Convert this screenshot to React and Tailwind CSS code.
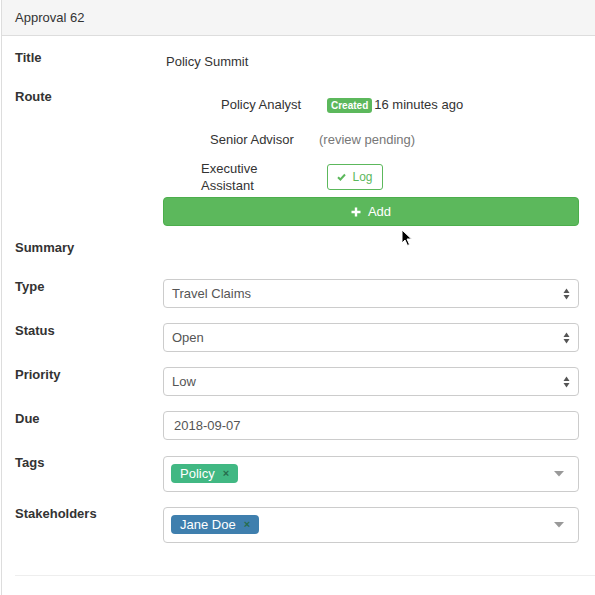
import React from "react";

const font = { fontFamily: '"Liberation Sans", Arial, sans-serif' };

const Label = ({ children }) => (
  <div className="w-[148px] shrink-0 text-[13px] leading-[20px] font-bold text-[#333]">
    {children}
  </div>
);

const SelectArrows = () => (
  <svg width="7" height="12" viewBox="0 0 7 12" className="absolute right-[8px] top-[8px]">
    <path d="M3.5 0.5 L6.5 5 L0.5 5 Z" fill="#555" />
    <path d="M0.5 7 L6.5 7 L3.5 11.5 Z" fill="#555" />
  </svg>
);

const SelectBox = ({ value }) => (
  <div className="relative mt-[2px] h-[29px] w-full rounded-[4px] border border-[#ccc] bg-white pl-[8px] text-[13px] leading-[27px] text-[#555]">
    {value}
    <SelectArrows />
  </div>
);

const Caret = () => (
  <svg width="10" height="6" viewBox="0 0 10 6" className="absolute right-[14px] top-[14px]">
    <path d="M0 0 L10 0 L5 5.5 Z" fill="#999" />
  </svg>
);

const Chip = ({ label, bg }) => (
  <span
    className={`flex h-[19px] items-center rounded-[4px] pl-[9px] pr-[9px] text-[13px] leading-[19px] text-white ${bg}`}
  >
    {label}
    <span className="ml-[8px] text-[11px] font-bold text-[#266d4d]">×</span>
  </span>
);

const FormRow = ({ label, className = "", children }) => (
  <div className={`flex ${className}`}>
    <Label>{label}</Label>
    <div className="flex-1">{children}</div>
  </div>
);

const App = () => {
  return (
    <div className="relative h-[595px] w-[595px] overflow-hidden bg-white" style={font}>
      <div className="ml-px min-h-[595px] border-l border-[#ddd]">
        {/* Panel heading */}
        <div className="h-[36px] border-b border-[#ddd] bg-[#f5f5f5] pl-[13px] text-[13px] leading-[35px] text-[#333]">
          Approval 62
        </div>

        <div className="pl-[13px] pr-[16px]">
          {/* Title */}
          <FormRow label="Title" className="mt-[12px]">
            <div className="pl-[3px] pt-[4px] text-[13px] leading-[20px] text-[#333]">
              Policy Summit
            </div>
          </FormRow>

          {/* Route */}
          <FormRow label="Route" className="mt-[15px]">
            <div className="pt-[8px] text-[13px] text-[#333]">
              <div className="flex h-[20px] items-center">
                <div className="w-[164px] pl-[58px]">Policy Analyst</div>
                <span className="rounded-[3px] bg-[#5cb85c] px-[4px] text-[10px] font-bold leading-[15px] text-white">
                  Created
                </span>
                <span className="ml-[2px]">16 minutes ago</span>
              </div>
              <div className="mt-[15px] flex h-[20px] items-center">
                <div className="w-[156px] pl-[47px]">Senior Advisor</div>
                <span className="text-[#777]">(review pending)</span>
              </div>
              <div className="mt-[10px] flex items-center">
                <div className="ml-[38px] w-[62px] leading-[17px]">Executive Assistant</div>
                <button className="ml-[64px] flex h-[26px] w-[56px] items-center justify-center rounded-[3px] border border-[#5cb85c] bg-white text-[12px] text-[#5cb85c]">
                  <svg width="9" height="8" viewBox="0 0 9 8" className="mr-[6px]">
                    <path d="M1 4.2 L3.4 6.5 L8 1.5" stroke="#5cb85c" strokeWidth="2" fill="none" />
                  </svg>
                  Log
                </button>
              </div>
              <button className="mt-[3px] flex h-[29px] w-full items-center justify-center rounded-[4px] border border-[#4cae4c] bg-[#5cb85c] text-[13px] text-white">
                <svg width="10" height="10" viewBox="0 0 10 10" className="mr-[7px]">
                  <path d="M5 0.5 V9.5 M0.5 5 H9.5" stroke="#fff" strokeWidth="2.4" />
                </svg>
                Add
              </button>
            </div>
          </FormRow>

          {/* Summary */}
          <FormRow label="Summary" className="mt-[12px]" />

          <FormRow label="Type" className="mt-[19px]">
            <SelectBox value="Travel Claims" />
          </FormRow>
          <FormRow label="Status" className="mt-[13px]">
            <SelectBox value="Open" />
          </FormRow>
          <FormRow label="Priority" className="mt-[13px]">
            <SelectBox value="Low" />
          </FormRow>
          <FormRow label="Due" className="mt-[13px]">
            <div className="mt-[2px] h-[29px] w-full rounded-[4px] border border-[#ccc] bg-white pl-[10px] text-[13px] leading-[27px] text-[#555]">
              2018-09-07
            </div>
          </FormRow>

          <FormRow label="Tags" className="mt-[13px]">
            <div className="relative mt-[3px] flex h-[36px] w-full items-start rounded-[4px] border border-[#ccc] bg-white pl-[7px] pt-[7px]">
              <Chip label="Policy" bg="bg-[#41b883]" />
              <Caret />
            </div>
          </FormRow>
          <FormRow label="Stakeholders" className="mt-[12px]">
            <div className="relative mt-[3px] flex h-[36px] w-full items-start rounded-[4px] border border-[#ccc] bg-white pl-[7px] pt-[7px]">
              <Chip label="Jane Doe" bg="bg-[#3f7fae]" />
              <Caret />
            </div>
          </FormRow>
        </div>

        <div className="ml-[13px] mt-[32px] border-t border-[#eee]" />
      </div>

      {/* mouse pointer */}
      <svg width="12" height="18" viewBox="0 0 12 18" className="absolute left-[401px] top-[229px]">
        <path d="M1 1 L1 14 L4 11 L6.5 16.5 L8.5 15.5 L6 10 L10.5 10 Z" fill="#000" stroke="#fff" strokeWidth="1" />
      </svg>
    </div>
  );
};

export default App;
